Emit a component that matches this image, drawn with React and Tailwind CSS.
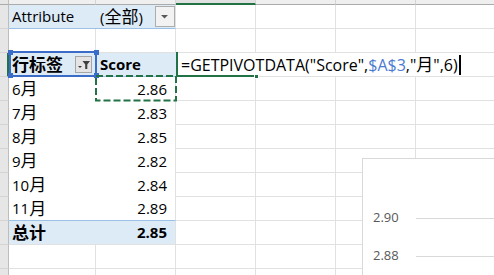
import React from 'react';

const font = "font-['Open_Sans','Noto_Sans_CJK_SC',sans-serif]";

const months = [
  ['6', '2.86'],
  ['7', '2.83'],
  ['8', '2.85'],
  ['9', '2.82'],
  ['10', '2.84'],
  ['11', '2.89'],
];

const Cjk = ({ children }) => <span className="text-[17px]">{children}</span>;

const RowHead = ({ active }) => (
  <div
    className={
      active
        ? 'w-[9px] shrink-0 bg-[#e6e6e6] border-r-2 border-r-[#217346] border-b border-b-[#d4d4d4]'
        : 'w-[9px] shrink-0 bg-[#e6e6e6] border-r border-r-[#bdbdbd] border-b border-b-[#d4d4d4]'
    }
  />
);

const Blank = () => <div className="w-20 shrink-0 border-r border-r-[#e1e1e1] border-b border-b-[#e1e1e1]" />;

const Blanks = () => (
  <>
    <Blank />
    <Blank />
    <Blank />
    <Blank />
  </>
);

const DropBtn = () => (
  <div className="w-5 h-[21px] shrink-0 flex items-center justify-center bg-[#f2f2f2] border border-[#adadad]">
    <svg width="8" height="4" viewBox="0 0 8 4">
      <path d="M0 0 H7 L3.5 3.5 Z" fill="#595959" />
    </svg>
  </div>
);

const FilterBtn = () => (
  <div className="w-[17px] h-[17px] shrink-0 flex items-center justify-center bg-[#e4e4e4] border border-[#a6a6a6]">
    <svg width="15" height="15" viewBox="0 0 15 15">
      <path d="M2 9 H6 L4 11 Z" fill="#404040" />
      <path d="M6.5 4 H14 L11.3 7.5 V12 H9.2 V7.5 Z" fill="#404040" />
    </svg>
  </div>
);

export default function App() {
  return (
    <div className={`relative w-[494px] h-[275px] overflow-hidden bg-white text-black text-[15px] ${font}`}>
      {/* column header strip (mostly scrolled off) */}
      <div className="flex h-[5px]">
        <div className="w-[9px] shrink-0 bg-[#e6e6e6] border-r border-r-[#bdbdbd] border-b border-b-[#ababab]" />
        <div className="w-[87px] shrink-0 bg-[#efefef] border-r border-r-[#d4d4d4] border-b border-b-[#ababab]" />
        <div className="w-20 shrink-0 bg-[#efefef] border-r border-r-[#d4d4d4] border-b border-b-[#ababab]" />
        <div className="w-20 shrink-0 bg-[#e1e1e1] border-r border-r-[#d4d4d4] border-b-2 border-b-[#217346]" />
        <div className="w-20 shrink-0 bg-[#efefef] border-r border-r-[#d4d4d4] border-b border-b-[#ababab]" />
        <div className="w-20 shrink-0 bg-[#efefef] border-r border-r-[#d4d4d4] border-b border-b-[#ababab]" />
        <div className="w-20 shrink-0 bg-[#efefef] border-r border-r-[#d4d4d4] border-b border-b-[#ababab]" />
      </div>

      {/* row 1 */}
      <div className="flex h-6">
        <RowHead />
        <div className="w-[87px] shrink-0 flex items-center pl-[3px] bg-[#ddebf7] border-b border-b-[#9bc2e6]">Attribute</div>
        <div className="w-20 shrink-0 flex items-center justify-between pl-[4px] bg-[#ddebf7] border-b border-b-[#9bc2e6] border-r border-r-[#e1e1e1]">
          <span>
            (<Cjk>全部</Cjk>)
          </span>
          <DropBtn />
        </div>
        <Blanks />
      </div>

      {/* row 2 */}
      <div className="flex h-6">
        <RowHead />
        <div className="w-[87px] shrink-0 border-r border-r-[#e1e1e1] border-b border-b-[#e1e1e1]" />
        <Blank />
        <Blanks />
      </div>

      {/* row 3 */}
      <div className="flex h-6">
        <RowHead active />
        <div className="w-[87px] shrink-0 flex items-center justify-between pl-[3px] pr-[4px] bg-[#ddebf7] border-b border-b-[#9bc2e6] font-bold">
          <Cjk>行标签</Cjk>
          <FilterBtn />
        </div>
        <div className="w-20 shrink-0 flex items-center pl-[4px] bg-[#ddebf7] border-b border-b-[#9bc2e6] font-bold">Score</div>
        <div className="w-20 shrink-0 flex items-center pl-[5px] whitespace-nowrap border-b border-b-[#e1e1e1] text-[16px]">
          =GETPIVOTDATA("Score",<span className="text-[#4a7bd0]">$A$3</span>,"<Cjk>月</Cjk>",6)
          <span className="shrink-0 ml-px w-[2px] h-[20px] bg-black" />
        </div>
        <div className="w-20 shrink-0 border-b border-b-[#e1e1e1]" />
        <div className="w-20 shrink-0 border-b border-b-[#e1e1e1]" />
        <div className="w-20 shrink-0 border-b border-b-[#e1e1e1]" />
      </div>

      {/* month rows */}
      {months.map(([m, v], i) => (
        <div key={m} className="flex h-6">
          <RowHead />
          <div
            className={
              i === months.length - 1
                ? 'w-[87px] shrink-0 flex items-center pl-[3px] border-b border-b-[#9bc2e6]'
                : 'w-[87px] shrink-0 flex items-center pl-[3px]'
            }
          >
            {m}
            <Cjk>月</Cjk>
          </div>
          <div
            className={
              i === months.length - 1
                ? 'w-20 shrink-0 flex items-center justify-end pr-[8px] border-r border-r-[#e1e1e1] border-b border-b-[#9bc2e6]'
                : 'w-20 shrink-0 flex items-center justify-end pr-[8px] border-r border-r-[#e1e1e1]'
            }
          >
            {v}
          </div>
          <Blanks />
        </div>
      ))}

      {/* grand total */}
      <div className="flex h-6 font-bold">
        <RowHead />
        <div className="w-[87px] shrink-0 flex items-center pl-[3px] bg-[#ddebf7] border-b border-b-[#e1e1e1]">
          <Cjk>总计</Cjk>
        </div>
        <div className="w-20 shrink-0 flex items-center justify-end pr-[8px] bg-[#ddebf7] border-r border-r-[#e1e1e1] border-b border-b-[#e1e1e1]">
          2.85
        </div>
        <Blanks />
      </div>

      {[0, 1, 2].map((k) => (
        <div key={k} className="flex h-6">
          <RowHead />
          <div className="w-[87px] shrink-0 border-r border-r-[#e1e1e1] border-b border-b-[#e1e1e1]" />
          <Blank />
          <Blanks />
        </div>
      ))}

      {/* A3 reference highlight */}
      <div className="absolute left-[9px] top-[51px] w-[88px] h-[26px] border-2 border-[#3a6cc8] pointer-events-none" />
      <div className="absolute left-[8px] top-[50px] w-[5px] h-[5px] bg-[#3a6cc8]" />
      <div className="absolute left-[94px] top-[50px] w-[5px] h-[5px] bg-[#3a6cc8]" />
      <div className="absolute left-[8px] top-[73px] w-[5px] h-[5px] bg-[#3a6cc8]" />
      <div className="absolute left-[94px] top-[73px] w-[5px] h-[5px] bg-[#3a6cc8]" />

      {/* B4 copy marquee */}
      <svg className="absolute left-[95px] top-[75px]" width="83" height="27" viewBox="0 0 83 27">
        <rect x="1" y="1" width="80" height="24.5" fill="none" stroke="#217346" strokeWidth="2" strokeDasharray="7 3" />
      </svg>

      {/* C3 active cell */}
      <div className="absolute left-[176px] top-[52px] w-[2px] h-[25px] bg-[#217346]" />
      <div className="absolute left-[176px] top-[75px] w-[78px] h-[2px] bg-[#217346]" />
      <div className="absolute left-[254px] top-[74px] w-[5px] h-[5px] bg-[#217346] border border-white" />

      {/* chart */}
      <div className="absolute left-[362px] top-[158px] w-[140px] h-[130px] bg-white border border-[#d9d9d9] pt-[49px] flex flex-col gap-[18px]">
        <div className="flex items-center h-5">
          <div className="w-[53px] shrink-0 pl-[10px] text-[13px] text-[#595959]">2.90</div>
          <div className="flex-1 h-px bg-[#d9d9d9]" />
        </div>
        <div className="flex items-center h-5">
          <div className="w-[53px] shrink-0 pl-[10px] text-[13px] text-[#595959]">2.88</div>
          <div className="flex-1 h-px bg-[#d9d9d9]" />
        </div>
      </div>
    </div>
  );
}
